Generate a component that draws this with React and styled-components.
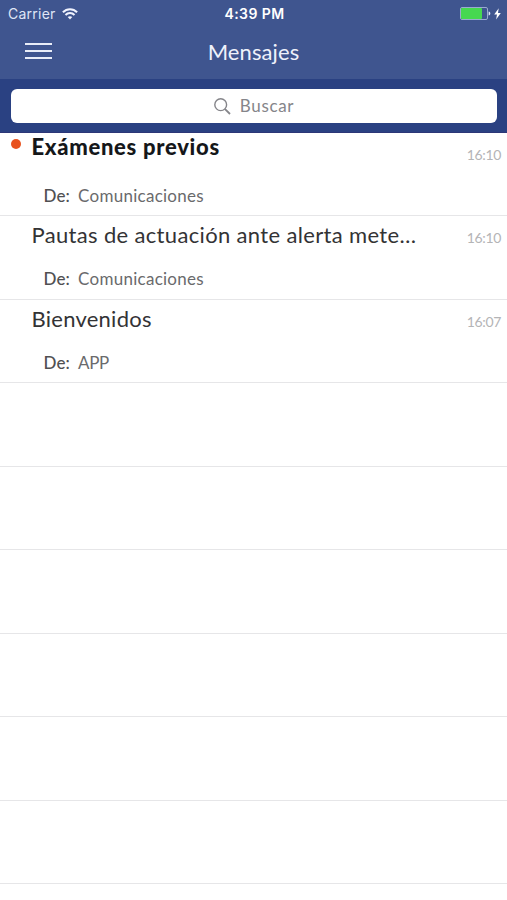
import React from "react"

import styled, {createGlobalStyle} from "styled-components";

const GlobalStyle = createGlobalStyle`
  * {
    box-sizing: border-box;
  }

  body {
    margin: 0;
    background-color: #fff;
    font-family: Lato, "Open Sans", sans-serif;
  }
`;

const Screen = styled.div`
  width: 100%;
  height: 900px;
  overflow: hidden;
  background-color: #fff;
`;

const Header = styled.header`
  height: 79px;
  background-color: #3f558f;
`;

const StatusBar = styled.div`
  height: 27px;
  padding: 0 6px 0 8px;
  display: grid;
  grid-template-columns: 1fr auto 1fr;
  align-items: center;
  font-family: Inter, sans-serif;
  color: #fff;
`;

const StatusGroup = styled.div`
  display: flex;
  align-items: center;
  justify-content: ${props => props.align || "flex-start"};
  gap: ${props => props.gap || "0"};
`;

const StatusText = styled.span`
  font-size: 14px;
  line-height: 27px;
  font-weight: ${props => props.weight || "400"};
  letter-spacing: ${props => props.spacing || "0"};
  color: ${props => props.color || "#fff"};
`;

const NavBar = styled.div`
  height: 52px;
  padding: 0 25px;
  display: grid;
  grid-template-columns: 1fr auto 1fr;
`;

const MenuButton = styled.button`
  width: 28px;
  height: 16px;
  margin-top: 16px;
  padding: 0;
  border: 0;
  background: none;
  display: flex;
  flex-direction: column;
  justify-content: space-between;
`;

const MenuLine = styled.span`
  width: 27px;
  height: 2px;
  background-color: #e9edf8;
`;

const PageTitle = styled.h1`
  margin: 0;
  font-size: 22px;
  line-height: 50px;
  font-weight: 400;
  letter-spacing: 0.1px;
  color: #eef1fb;
`;

const SearchBar = styled.div`
  height: 53.5px;
  padding: 10px 10px 0 11px;
  background-color: #2a4182;
  border-bottom: 1px solid #2c3677;
`;

const SearchField = styled.div`
  height: 34px;
  border-radius: 6px;
  background-color: #fff;
  display: flex;
  align-items: center;
  justify-content: center;
  gap: 9px;
`;

const SearchText = styled.span`
  font-size: 17px;
  line-height: 34px;
  letter-spacing: 0.65px;
  color: #85858a;
`;

const MessageList = styled.ul`
  margin: 0;
  padding: 0;
  list-style: none;
`;

const MessageRow = styled.li`
  height: 83.5px;
  padding: 0 6px 0 11px;
  border-bottom: 1px solid #e6e6e8;
  display: grid;
  grid-template-columns: 20.5px 1fr auto;
`;

const UnreadDot = styled.span`
  width: 10px;
  height: 10px;
  margin-top: 6.5px;
  border-radius: 50%;
  background-color: ${props => props.unread ? "#e8521f" : "transparent"};
`;

const Subject = styled.div`
  height: 46px;
  font-size: 22px;
  line-height: ${props => props.unread ? "27px" : "38px"};
  font-weight: ${props => props.unread ? "900" : "400"};
  letter-spacing: ${props => props.spacing};
  color: ${props => props.unread ? "#15171a" : "#333335"};
  white-space: nowrap;
`;

const Sender = styled.div`
  padding-left: 12px;
  display: flex;
  gap: 8px;
  font-size: 17px;
  line-height: 34px;
`;

const SenderLabel = styled.span`
  font-weight: 500;
  letter-spacing: 0.15px;
  color: #505052;
`;

const SenderName = styled.span`
  letter-spacing: ${props => props.spacing};
  color: #6a6a6c;
`;

const Time = styled.span`
  font-size: 14px;
  line-height: 44px;
  letter-spacing: -0.35px;
  color: #b4b4b6;
`;

const WifiIcon = () => (
    <svg width="16" height="12" viewBox="0 0 16 12" fill="none" stroke="#f1f4ff" strokeWidth="2">
        <path d="M0.9 4.3C4.9 0.1 11.1 0.1 15.1 4.3"/>
        <path d="M3.5 7C6 4.4 10 4.4 12.5 7"/>
        <path d="M5.7 9.1C7 7.8 9 7.8 10.3 9.1L8 11.6Z" fill="#f1f4ff" stroke="none"/>
    </svg>
);

const BatteryIcon = () => (
    <svg width="31" height="13" viewBox="0 0 31 13">
        <rect x="0.5" y="0.5" width="27" height="12" rx="1.5" fill="none" stroke="#9aaad0"/>
        <rect x="1" y="1" width="21" height="11" rx="1" fill="#46d850"/>
        <path d="M28.6 4.5C30.9 5 30.9 8 28.6 8.5Z" fill="#e0e7fa"/>
    </svg>
);

const BoltIcon = () => (
    <svg width="7" height="12" viewBox="0 0 7 12">
        <path d="M4.7 0.3L0.2 6.5H3L2.1 11.5L6.8 4.9H4Z" fill="#fff"/>
    </svg>
);

const SearchIcon = () => (
    <svg width="17" height="17" viewBox="0 0 17 17" fill="none" stroke="#85858a" strokeWidth="1.4">
        <circle cx="6.7" cy="6.7" r="5.9"/>
        <path d="M10.8 10.8L16 16" strokeWidth="1.8"/>
    </svg>
);

const messages = [
    {subject: "Exámenes previos", sender: "Comunicaciones", time: "16:10", unread: true, spacing: "0.7px", senderSpacing: "0.27px"},
    {subject: "Pautas de actuación ante alerta mete…", sender: "Comunicaciones", time: "16:10", spacing: "0.34px", senderSpacing: "0.27px"},
    {subject: "Bienvenidos", sender: "APP", time: "16:07", spacing: "0.25px", senderSpacing: "-0.4px"},
];

const emptyRows = [1, 2, 3, 4, 5, 6];

const App = () => {
    return (
        <Screen>
            <GlobalStyle/>
            <Header>
                <StatusBar>
                    <StatusGroup gap="6px">
                        <StatusText color="#dfe5f6" spacing="0.25px">Carrier</StatusText>
                        <WifiIcon/>
                    </StatusGroup>
                    <StatusText weight="600" spacing="0.4px">4:39 PM</StatusText>
                    <StatusGroup align="flex-end" gap="3px">
                        <BatteryIcon/>
                        <BoltIcon/>
                    </StatusGroup>
                </StatusBar>
                <NavBar>
                    <MenuButton aria-label="Menú">
                        <MenuLine/>
                        <MenuLine/>
                        <MenuLine/>
                    </MenuButton>
                    <PageTitle>Mensajes</PageTitle>
                </NavBar>
            </Header>
            <SearchBar>
                <SearchField>
                    <SearchIcon/>
                    <SearchText>Buscar</SearchText>
                </SearchField>
            </SearchBar>
            <MessageList>
                {messages.map(message => (
                    <MessageRow key={message.subject}>
                        <UnreadDot unread={message.unread}/>
                        <div>
                            <Subject unread={message.unread} spacing={message.spacing}>{message.subject}</Subject>
                            <Sender>
                                <SenderLabel>De:</SenderLabel>
                                <SenderName spacing={message.senderSpacing}>{message.sender}</SenderName>
                            </Sender>
                        </div>
                        <Time>{message.time}</Time>
                    </MessageRow>
                ))}
                {emptyRows.map(row => <MessageRow key={row}/>)}
            </MessageList>
        </Screen>
    );
};

export default App;
